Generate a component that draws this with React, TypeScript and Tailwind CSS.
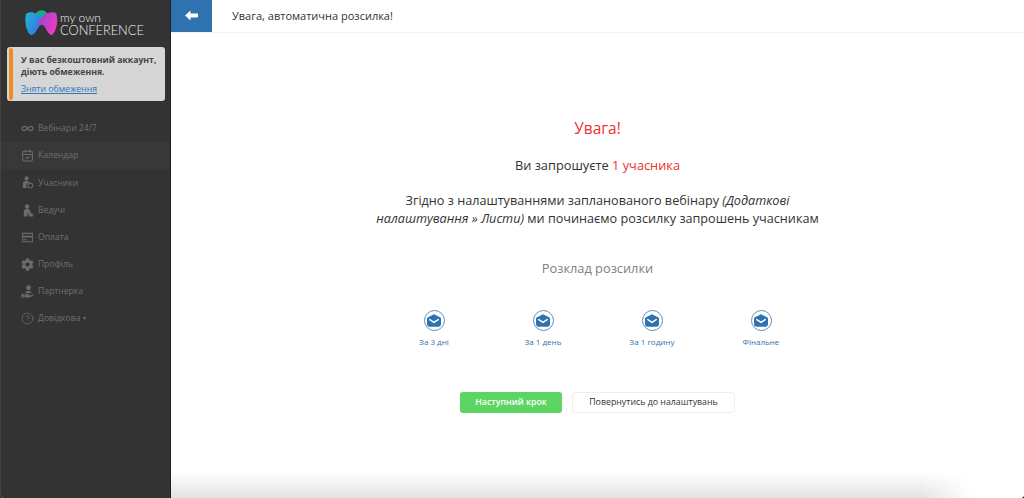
import type * as React from "react";
import { CalendarCheck, HelpCircle, Infinity as InfinityIcon } from "lucide-react";
import { FaCog } from "react-icons/fa";

const ICON = "w-[13px] h-[13px] shrink-0 text-[#6a6a6a]";

const ParticipantIcon: React.FC = () => (
  <svg viewBox="0 0 14 14" className={ICON} fill="currentColor">
    <circle cx="6" cy="2.6" r="2.2" />
    <path d="M2 13 V8 C2 6 4 5.4 6 5.4 C8 5.4 9 6 9.6 7 A3.6 3.6 0 0 0 6.4 13 Z" />
    <circle cx="10" cy="10.3" r="2.6" fill="none" stroke="currentColor" strokeWidth="1.2" />
  </svg>
);

const HostIcon: React.FC = () => (
  <svg viewBox="0 0 14 14" className={ICON} fill="currentColor">
    <circle cx="6.5" cy="2.6" r="2.4" />
    <path d="M3 13.5 V7.5 C3 6 5 5.4 6.5 5.4 C8 5.4 10 6 10 7.5 V9 L13 11 V13.5 H8.5 V10.5 H7 V13.5 Z" />
  </svg>
);

const CardIcon: React.FC = () => (
  <svg viewBox="0 0 14 14" className={ICON} fill="currentColor">
    <path d="M1 2 H13 V3.2 H1 Z M1 5 H13 V7 H1 Z M1 3.2 H2 V12 H1 Z M12 3.2 H13 V12 H12 Z M1 11 H13 V12 H1 Z M3 9 H6 V10 H3 Z" />
  </svg>
);

const PartnerIcon: React.FC = () => (
  <svg viewBox="0 0 14 14" className={ICON} fill="currentColor">
    <circle cx="8" cy="3" r="2.6" />
    <path d="M4.5 9 C4.5 7 6.5 6.4 8 6.4 C9.5 6.4 11.5 7 11.5 9 Z" />
    <path d="M0.5 9.5 H3 V13.5 H0.5 Z M3.8 10 H8 C9 10 9 11.2 8 11.2 H6.5 L11 11 L13.5 10 V11.5 L9 13.5 H3.8 Z" />
  </svg>
);

const menu: { label: string; icon: React.ReactNode; active?: boolean; caret?: boolean }[] = [
  { label: "Вебінари 24/7", icon: <InfinityIcon strokeWidth={2.2} className={ICON} /> },
  { label: "Календар", icon: <CalendarCheck strokeWidth={2} className={ICON} />, active: true },
  { label: "Учасники", icon: <ParticipantIcon /> },
  { label: "Ведучі", icon: <HostIcon /> },
  { label: "Оплата", icon: <CardIcon /> },
  { label: "Профіль", icon: <FaCog className={ICON} /> },
  { label: "Партнерка", icon: <PartnerIcon /> },
  { label: "Довідкова", icon: <HelpCircle strokeWidth={1.6} className={ICON} />, caret: true },
];

const Logo: React.FC = () => (
  <div className="flex items-center pl-[23px] gap-[1px] h-[27px] mt-[9px]">
    <svg width="35" height="27" viewBox="0 0 35 27" className="shrink-0">
      <defs>
        <linearGradient id="logoLeft" x1="0" y1="0" x2="1" y2="0.6">
          <stop offset="0" stopColor="#1fb6d8" />
          <stop offset="1" stopColor="#3a6fe0" />
        </linearGradient>
        <linearGradient id="logoRight" x1="0" y1="0" x2="1" y2="0.5">
          <stop offset="0" stopColor="#8a45d8" />
          <stop offset="1" stopColor="#ec3cc0" />
        </linearGradient>
      </defs>
      <path d="M12 4 C14 1 19 0 22 3 L25 6 L18 14 L12 10 Z" fill="#1fa88e" />
      <path d="M2 5 C6 2 11 3 15 7 L20 13 C18 15 15 17 14 19 C12 23 10 26 7 26 C3 24 0 14 2 5 Z" fill="url(#logoLeft)" />
      <path d="M32 4 C27 2 21 4 17 9 L13 16 C16 15 19 15 21 18 C23 22 25 26 28 26 C32 23 35 12 32 4 Z" fill="url(#logoRight)" />
    </svg>
    <div className="font-['Lato',sans-serif] font-light text-[#f0f0f0] pt-[3px]">
      <div className="text-[12px] leading-[12px]">my own</div>
      <div className="text-[12.8px] leading-[14px] -mt-[1px]">CONFERENCE</div>
    </div>
  </div>
);

const Sidebar: React.FC = () => (
  <aside className="w-[171px] shrink-0 bg-[#333333] flex flex-col border-l border-l-[#444444] border-r border-r-[#1f1f1f]">
    <Logo />
    <div className="ml-[6px] w-[158px] mt-[11px] h-[54px] bg-[#d6d6d6] rounded-[3px] flex">
      <div className="w-[4px] my-[1px] ml-[2px] bg-[#f08a24] rounded-[2px] shrink-0" />
      <div className="pl-[8px] pt-[7px]">
        <p className="text-[8.7px] leading-[12px] font-bold text-[#444444]">
          У вас безкоштовний аккаунт, діють обмеження.
        </p>
        <a className="block mt-[5px] text-[8.7px] leading-[12px] text-[#2f78bd] underline">Зняти обмеження</a>
      </div>
    </div>
    <nav className="mt-[14px]">
      {menu.map((item) => (
        <div
          key={item.label}
          className={`h-[27.2px] flex items-center pl-[20px] gap-[4px] text-[8.6px] text-[#6f6f6f] ${item.active ? "bg-[#383838]" : ""}`}
        >
          {item.icon}
          <span>{item.label}</span>
          {item.caret && <span className="-ml-[1px] text-[6px]">▾</span>}
        </div>
      ))}
    </nav>
  </aside>
);

const MailStep: React.FC<{ label: string }> = ({ label }) => (
  <div className="w-[109px] flex flex-col items-center">
    <div className="w-[21px] h-[21px] rounded-full border border-[#5b8fc0] flex items-center justify-center">
      <svg width="14" height="13" viewBox="0 0 14 13">
        <path d="M7 0.3 L13 3.2 C13.7 3.6 14 4 14 5 V10 C14 11.6 13 12.7 11.4 12.7 H2.6 C1 12.7 0 11.6 0 10 V5 C0 4 0.3 3.6 1 3.2 Z" fill="#2f72b0" />
        <path d="M2.8 5.6 L7 8.3 L11.2 5.6" fill="none" stroke="#ffffff" strokeWidth="1.5" strokeLinecap="round" />
      </svg>
    </div>
    <span className="mt-[5px] text-[8px] leading-[12px] text-[#2f72b0]">{label}</span>
  </div>
);

export default function App() {
  return (
    <div className="w-[1024px] h-[498px] bg-[#111111]">
      <div className="w-full h-full flex overflow-hidden rounded-b-[4px] bg-white font-['Open_Sans','Noto_Sans',sans-serif]">
        <Sidebar />
        <main className="flex-1 flex flex-col min-w-0 relative">
          <header className="h-[33px] shrink-0 flex items-stretch border-b border-[#f2f2f2]">
            <div className="w-[41px] bg-[#2f72b0] flex items-center justify-center">
              <svg width="13" height="11" viewBox="0 0 13 11" className="-mt-[2px]">
                <path d="M0 5.5 L5.5 0.5 V3.5 H12 C12.6 3.5 13 3.9 13 4.5 V6.5 C13 7.1 12.6 7.5 12 7.5 H5.5 V10.5 Z" fill="#ffffff" />
              </svg>
            </div>
            <div className="pl-[20px] flex items-center text-[11px] text-[#333333]">Увага, автоматична розсилка!</div>
          </header>
          <div className="flex-1 flex flex-col items-center pt-[84px]">
            <h1 className="text-[15.5px] leading-[22px] text-[#f03030]">Увага!</h1>
            <p className="mt-[17px] text-[12.8px] leading-[18px] text-[#333333]">
              Ви запрошуєте <span className="text-[#f03030]">1 учасника</span>
            </p>
            <p className="mt-[18px] w-[450px] text-center text-[12.65px] leading-[17.5px] text-[#333333]">
              Згідно з налаштуваннями запланованого вебінару <em>(Додаткові налаштування » Листи)</em> ми починаємо розсилку запрошень учасникам
            </p>
            <h2 className="mt-[31px] text-[12.8px] leading-[20px] text-[#808080]">Розклад розсилки</h2>
            <div className="mt-[32px] flex">
              <MailStep label="За 3 дні" />
              <MailStep label="За 1 день" />
              <MailStep label="За 1 годину" />
              <MailStep label="Фінальне" />
            </div>
            <div className="mt-[44px] flex gap-[10px]">
              <button className="w-[102px] h-[21px] rounded-[3px] bg-[#5cd663] text-white text-[8.8px] font-semibold">Наступний крок</button>
              <button className="w-[163px] h-[21px] rounded-[3px] bg-white border border-[#eeeeee] text-[#333333] text-[8.8px]">Повернутись до налаштувань</button>
            </div>
          </div>
          <div className="absolute inset-x-0 bottom-0 h-[26px] bg-gradient-to-b from-white to-[#e2e2e2]" />
          <div className="absolute right-0 bottom-0 w-[104px] h-[26px] bg-gradient-to-r from-transparent to-white to-50%" />
        </main>
      </div>
    </div>
  );
}
